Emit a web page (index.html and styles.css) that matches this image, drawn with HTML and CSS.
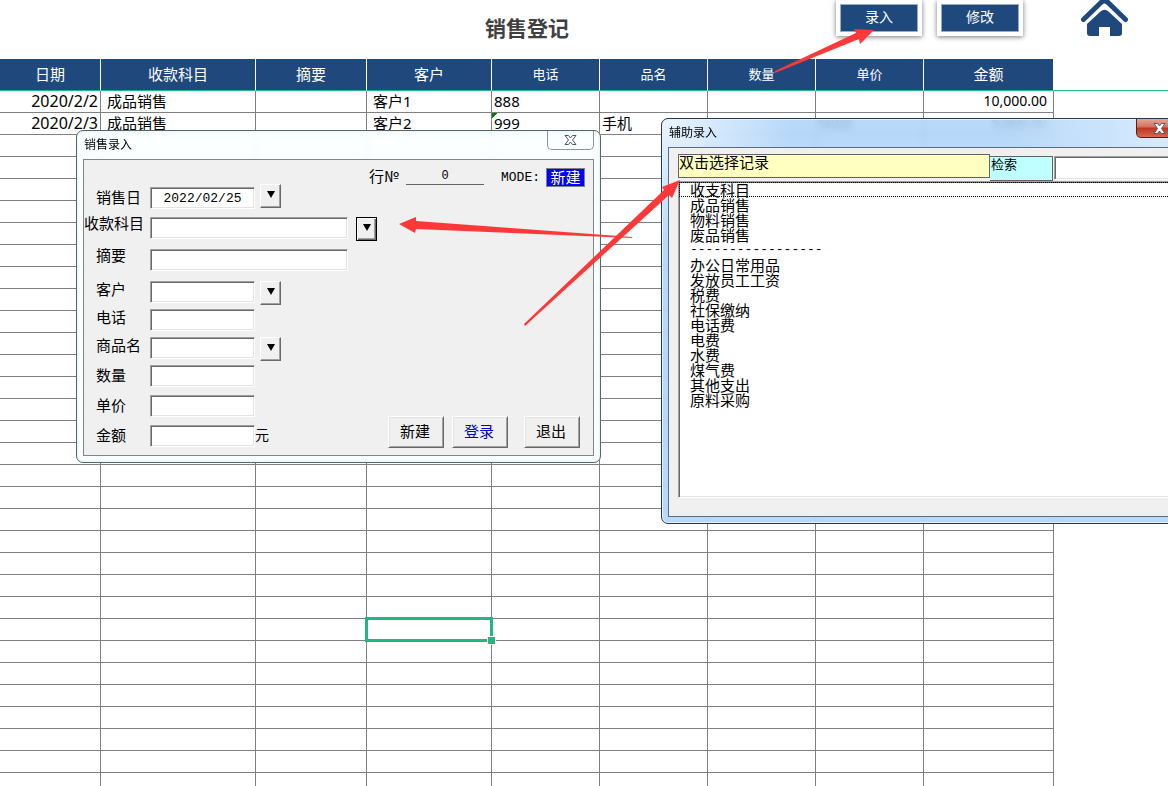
FILE: index.html
```html
<!DOCTYPE html>
<html lang="zh-CN">
<head>
    <meta charset="utf-8">
    <title>销售登记</title>
    <link rel="stylesheet" href="styles.css">
</head>
<body>
    <header class="top">
        <h1>销售登记</h1>
        <button class="top-button" type="button">录入</button>
        <button class="top-button" type="button">修改</button>
        <a class="home" href="#" aria-label="首页">
            <svg width="48" height="38" viewBox="0 0 48 38">
                <path d="M3.500 19.500L21 2.500Q24.500 -1 28 2.500L45.500 19.500" fill="none" stroke="#1f497d" stroke-width="5" stroke-linecap="round" stroke-linejoin="round"/>
                <path d="M20.500 11.500Q24.500 8 28.500 11.500L42 24V33Q42 36 39 36H30V27H19V36H10Q7 36 7 33V24Z" fill="#1f497d"/>
            </svg>
        </a>
    </header>

    <table class="sheet">
        <colgroup>
            <col class="col-date">
            <col class="col-subject">
            <col class="col-note">
            <col class="col-customer">
            <col class="col-small">
            <col class="col-small">
            <col class="col-small">
            <col class="col-small">
            <col class="col-amount">
            <col>
        </colgroup>
        <thead>
            <tr>
                <th>日期</th>
                <th>收款科目</th>
                <th>摘要</th>
                <th>客户</th>
                <th class="small">电话</th>
                <th class="small">品名</th>
                <th class="small">数量</th>
                <th class="small">单价</th>
                <th>金额</th>
                <td class="outside"></td>
            </tr>
        </thead>
        <tbody id="salesRows">
            <tr>
                <td class="date">2020/2/2</td>
                <td class="subject">成品销售</td>
                <td></td>
                <td class="subject">客户1</td>
                <td>888</td>
                <td></td>
                <td></td>
                <td></td>
                <td class="amount">10,000.00</td>
                <td class="outside"></td>
            </tr>
            <tr>
                <td class="date">2020/2/3</td>
                <td class="subject">成品销售</td>
                <td></td>
                <td class="subject">客户2</td>
                <td class="as-text">999</td>
                <td>手机</td>
                <td></td>
                <td>5000</td>
                <td class="amount">5,000.00</td>
                <td class="outside"></td>
            </tr>
        </tbody>
    </table>

    <section class="window entry">
        <div class="titlebar">
            <span>销售录入</span>
            <button class="close" type="button" aria-label="关闭">
                <svg width="13" height="10" viewBox="0 0 13 10"><path d="M1 .5H4.500L6.500 3L8.500 .5H12L8.500 5L12 9.500H8.500L6.500 7L4.500 9.500H1L4.500 5Z" fill="#fff" stroke="#4d565e"/></svg>
            </button>
        </div>
        <form class="client entry-form">
            <div class="status">
                <label for="rowNo">行№</label>
                <input class="row-no" id="rowNo" type="text" value="0">
                <span class="mode">MODE:</span>
                <span class="badge">新建</span>
            </div>
            <div class="fields">
                <div class="field">
                    <label for="saleDate">销售日</label>
                    <input class="box date-box" id="saleDate" type="text" value="2022/02/25">
                    <button class="drop" type="button" aria-label="选择日期"></button>
                </div>
                <div class="field roomy">
                    <label class="long" for="subject">收款科目</label>
                    <input class="box wide" id="subject" type="text">
                    <button class="drop focused" type="button" aria-label="选择科目"></button>
                </div>
                <div class="field roomy">
                    <label for="note">摘要</label>
                    <input class="box wide" id="note" type="text">
                </div>
                <div class="field tight">
                    <label for="customer">客户</label>
                    <input class="box" id="customer" type="text">
                    <button class="drop" type="button" aria-label="选择客户"></button>
                </div>
                <div class="field tight">
                    <label for="phone">电话</label>
                    <input class="box" id="phone" type="text">
                </div>
                <div class="field tight">
                    <label for="product">商品名</label>
                    <input class="box" id="product" type="text">
                    <button class="drop" type="button" aria-label="选择商品"></button>
                </div>
                <div class="field">
                    <label for="count">数量</label>
                    <input class="box" id="count" type="text">
                </div>
                <div class="field">
                    <label for="price">单价</label>
                    <input class="box" id="price" type="text">
                </div>
                <div class="field">
                    <label for="total">金额</label>
                    <input class="box" id="total" type="text">
                    <span class="unit">元</span>
                </div>
            </div>
            <div class="actions">
                <button type="button">新建</button>
                <button class="login" type="button">登录</button>
                <button class="exit" type="button">退出</button>
            </div>
        </form>
    </section>

    <section class="window helper">
        <div class="titlebar">
            <span>辅助录入</span>
            <button class="close" type="button" aria-label="关闭">
                <svg width="13" height="11" viewBox="0 0 13 11"><path d="M1 .5H4.500L6.500 3L8.500 .5H12L8.500 5.500L12 10.500H8.500L6.500 8L4.500 10.500H1L4.500 5.500Z" fill="#fff" stroke="#50566a"/></svg>
            </button>
        </div>
        <div class="client helper-body">
            <div class="search">
                <label class="hint" for="records">双击选择记录</label>
                <label class="search-label" for="keyword">检索</label>
                <input class="box keyword" id="keyword" type="text">
            </div>
            <select class="records" id="records" size="20">
                <option class="current">收支科目</option>
                <option>成品销售</option>
                <option>物料销售</option>
                <option>废品销售</option>
                <option class="divider">-----------------</option>
                <option>办公日常用品</option>
                <option>发放员工工资</option>
                <option>税费</option>
                <option>社保缴纳</option>
                <option>电话费</option>
                <option>电费</option>
                <option>水费</option>
                <option>煤气费</option>
                <option>其他支出</option>
                <option>原料采购</option>
            </select>
        </div>
    </section>

    <svg class="arrows" width="1" height="1">
        <polygon points="775,71 775,73 859,39 860,44 874,30 854,29 856,33"/>
        <polygon points="632,237 416,221 416,217 399,224 415,233 416,229 632,238"/>
        <polygon points="524,324 664,190 662,187 680,180 672,198 669,195 525,326"/>
    </svg>

    <script>
        const body = document.getElementById('salesRows');
        for (let n = 3; n <= 32; n++) {
            const row = body.insertRow();
            for (let c = 0; c < 10; c++) {
                const cell = row.insertCell();
                if (c === 9) cell.className = 'outside';
                if (n === 25 && c === 3) cell.className = 'selected';
            }
        }
    </script>
</body>
</html>
```

FILE: styles.css
```css
* {
    box-sizing: border-box;
}
body {
    margin: 0;
    height: 100vh;
    overflow: hidden;
    position: relative;
    background: #fff;
    color: #000;
    font-family: "Noto Sans", "Noto Sans CJK SC", sans-serif;
    font-size: 15px;
}
button, input, select {
    font: inherit;
    color: inherit;
    margin: 0;
    padding: 0;
    border-radius: 0;
    outline: none;
}

/* page header */
.top {
    display: flex;
    align-items: flex-start;
    height: 59px;
}
.top h1 {
    flex: 0 0 836px;
    margin: 0;
    padding-left: 218px;
    text-align: center;
    font-family: "Noto Sans CJK SC", sans-serif;
    font-size: 21px;
    line-height: 54px;
    color: #404040;
}
.top-button {
    width: 86px;
    height: 36px;
    margin-right: 15px;
    padding-bottom: 4px;
    border: 4px solid #fff;
    background: #1f497d;
    box-shadow: 0 1px 5px #777, inset 0 0 0 1px #9aabc2;
    color: #fff;
    font-family: "Noto Sans CJK SC", sans-serif;
    font-size: 14px;
}
.home {
    margin-left: 42px;
}
.home svg {
    display: block;
}

/* sheet */
.sheet {
    width: 100%;
    table-layout: fixed;
    border-collapse: separate;
    border-spacing: 0;
}
.col-date { width: 101px; }
.col-subject { width: 155px; }
.col-note { width: 111px; }
.col-customer { width: 125px; }
.col-small { width: 108px; }
.col-amount { width: 130px; }
th {
    height: 32px;
    padding: 0 0 2px;
    background: #1f497d;
    border-right: 1px solid #fff;
    border-bottom: 1px solid #20b880;
    color: #fff;
    font-weight: normal;
    font-size: 15px;
}
th.small {
    font-size: 13px;
}
td {
    position: relative;
    height: 22px;
    padding: 0 2px 2px;
    border-right: 1px solid #808080;
    border-bottom: 1px solid #808080;
    font-size: 15px;
    line-height: 18px;
    white-space: nowrap;
}
td.date {
    text-align: right;
    font-size: 16px;
}
td.subject {
    padding-left: 6px;
}
td.amount {
    padding-right: 6px;
    text-align: right;
    font-size: 14px;
}
td.outside {
    border: 0;
}
thead td.outside {
    border-bottom: 1px solid #20b880;
}
td.as-text {
    background: linear-gradient(135deg, #008000 4px, transparent 4px);
}
td.selected::before {
    content: "";
    position: absolute;
    inset: -2px;
    border: 3px solid #20b880;
    z-index: 1;
}
td.selected::after {
    content: "";
    position: absolute;
    right: -5px;
    bottom: -5px;
    width: 7px;
    height: 7px;
    background: #20b880;
    border: 1px solid #fff;
    z-index: 1;
}

/* windows */
.window {
    position: absolute;
    z-index: 2;
    display: flex;
    flex-direction: column;
    padding: 0 6px 6px;
    border: 1px solid #5a6468;
    border-radius: 7px;
    font-family: "Noto Sans CJK SC", sans-serif;
    backdrop-filter: blur(3px);
}
.titlebar {
    display: flex;
    justify-content: space-between;
    align-items: flex-start;
    height: 28px;
    padding-left: 1px;
    font-size: 12px;
    line-height: 26px;
}
.close {
    display: flex;
    justify-content: center;
    align-items: center;
    width: 47px;
    height: 19px;
    border: 1px solid #8c9698;
    border-top: 0;
    border-radius: 0 0 5px 5px;
    background: transparent;
}
.client {
    flex: 1;
    border: 1px solid #808688;
    background: #f0f0f0;
}
.entry {
    left: 76px;
    top: 130px;
    width: 525px;
    height: 333px;
    background: rgba(250, 255, 255, 0.88);
    box-shadow: inset 0 0 3px #c8f4f4;
}
.helper {
    left: 661px;
    top: 118px;
    width: 529px;
    height: 406px;
    border-color: #28384a;
    background:
        radial-gradient(circle at 0 0, rgba(240, 247, 254, 0.9), transparent 130px),
        radial-gradient(circle at 100% 0, rgba(225, 240, 254, 0.9), transparent 180px),
        rgba(172, 210, 248, 0.85);
    box-shadow: inset 0 0 0 1px #e6f2fd;
}
.helper .close {
    border-color: #5b1c18;
    background: linear-gradient(#e8a494, #d4705c 45%, #bd3420 50%, #d66a50);
}

/* entry form */
.entry-form {
    display: grid;
    grid-template-columns: auto 1fr;
    grid-template-rows: auto 1fr;
}
.status {
    grid-column: 1 / 3;
    display: flex;
    justify-content: flex-end;
    padding: 8px 8px 0 0;
    height: 27px;
    line-height: 16px;
}
.row-no {
    width: 78px;
    height: 17px;
    margin: 0 17px 0 7px;
    border: 0;
    border-bottom: 1px solid #646464;
    background: transparent;
    text-align: center;
    font-family: "Liberation Mono", monospace;
    font-size: 12px;
}
.mode {
    margin-right: 6px;
    font-family: "Liberation Mono", monospace;
    font-size: 13px;
    line-height: 20px;
}
.badge {
    width: 39px;
    height: 19px;
    border: 1px solid #808080;
    background: #0000ff;
    color: #fff;
    text-align: center;
    line-height: 15px;
}
.field {
    display: flex;
    align-items: flex-start;
    height: 22px;
    margin-bottom: 8px;
}
.field.roomy {
    margin-bottom: 10px;
}
.field.tight {
    margin-bottom: 6px;
}
.field label {
    width: 66px;
    padding-left: 12px;
    line-height: 20px;
    white-space: nowrap;
}
.field.roomy label {
    line-height: 12px;
}
.field.tight label {
    line-height: 16px;
}
.field label.long {
    padding-left: 0;
}
.box {
    width: 105px;
    height: 22px;
    border: 1px solid;
    border-color: #a0a0a0 #fff #fff #a0a0a0;
    background: #fff;
    box-shadow: inset 1px 1px 0 #696969, inset -1px -1px 0 #e3e3e3;
}
.box.wide {
    width: 198px;
}
.date-box {
    text-align: center;
    font-family: "Liberation Mono", monospace;
    font-size: 13px;
}
.drop {
    display: flex;
    justify-content: center;
    width: 21px;
    height: 24px;
    margin-left: 5px;
    padding-top: 6px;
    border: 1px solid;
    border-color: #fff #696969 #696969 #fff;
    background: #f0f0f0;
    box-shadow: inset -1px -1px 0 #a0a0a0;
}
.drop::before {
    content: "";
    border: 4px solid transparent;
    border-top: 7px solid #000;
    border-bottom: 0;
}
.date-box + .drop {
    margin-top: -3px;
}
.box.wide + .drop {
    margin-left: 8px;
}
.drop.focused {
    border-color: #000;
    box-shadow: inset 1px 1px 0 #fff, inset -1px -1px 0 #696969, inset -2px -2px 0 #a0a0a0;
}
.unit {
    font-size: 14px;
    line-height: 18px;
}
.actions {
    display: flex;
    justify-content: flex-end;
    align-items: flex-end;
    gap: 8px;
    padding: 0 13px 7px 0;
}
.actions button {
    width: 56px;
    height: 32px;
    padding: 0 2px 4px 0;
    border: 1px solid;
    border-color: #fff #696969 #696969 #fff;
    background: #f0f0f0;
    box-shadow: inset 1px 1px 0 #e3e3e3, inset -1px -1px 0 #a0a0a0;
}
.actions .login {
    color: #0000c0;
}
.actions .exit {
    margin-left: 8px;
}

/* helper list */
.helper-body {
    display: flex;
    flex-direction: column;
    padding: 6px 9px 18px;
    border-color: #5c6c7c;
}
.search {
    display: flex;
    align-items: flex-start;
    height: 27px;
}
.hint, .search-label {
    height: 24px;
    border: 1px solid #646464;
    line-height: 13px;
}
.hint {
    width: 312px;
    background: #ffffc0;
}
.search-label {
    width: 63px;
    height: 25px;
    margin-top: 2px;
    padding-left: 1px;
    border-left: 0;
    background: #c0ffff;
    font-size: 13px;
}
.keyword {
    flex: 1;
    height: 24px;
    margin: 2px 0 0 1px;
}
.records {
    flex: 1;
    width: 100%;
    border: 1px solid;
    border-color: #a0a0a0 #fff #fff #a0a0a0;
    background: #fff;
    box-shadow: inset 1px 1px 0 #696969, inset -1px -1px 0 #e3e3e3;
    overflow: hidden;
}
.records option {
    display: flex;
    align-items: center;
    height: 15px;
    min-height: 15px;
    padding: 0 0 0 11px;
    font-size: 15px;
}
.records .current {
    outline: 1px dotted #000;
    outline-offset: -1px;
}
.records .divider {
    font-family: "Liberation Mono", monospace;
    font-size: 13px;
}

/* red pointers */
.arrows {
    position: absolute;
    left: 0;
    top: 0;
    z-index: 3;
    overflow: visible;
    pointer-events: none;
    fill: #fc3838;
}
```
